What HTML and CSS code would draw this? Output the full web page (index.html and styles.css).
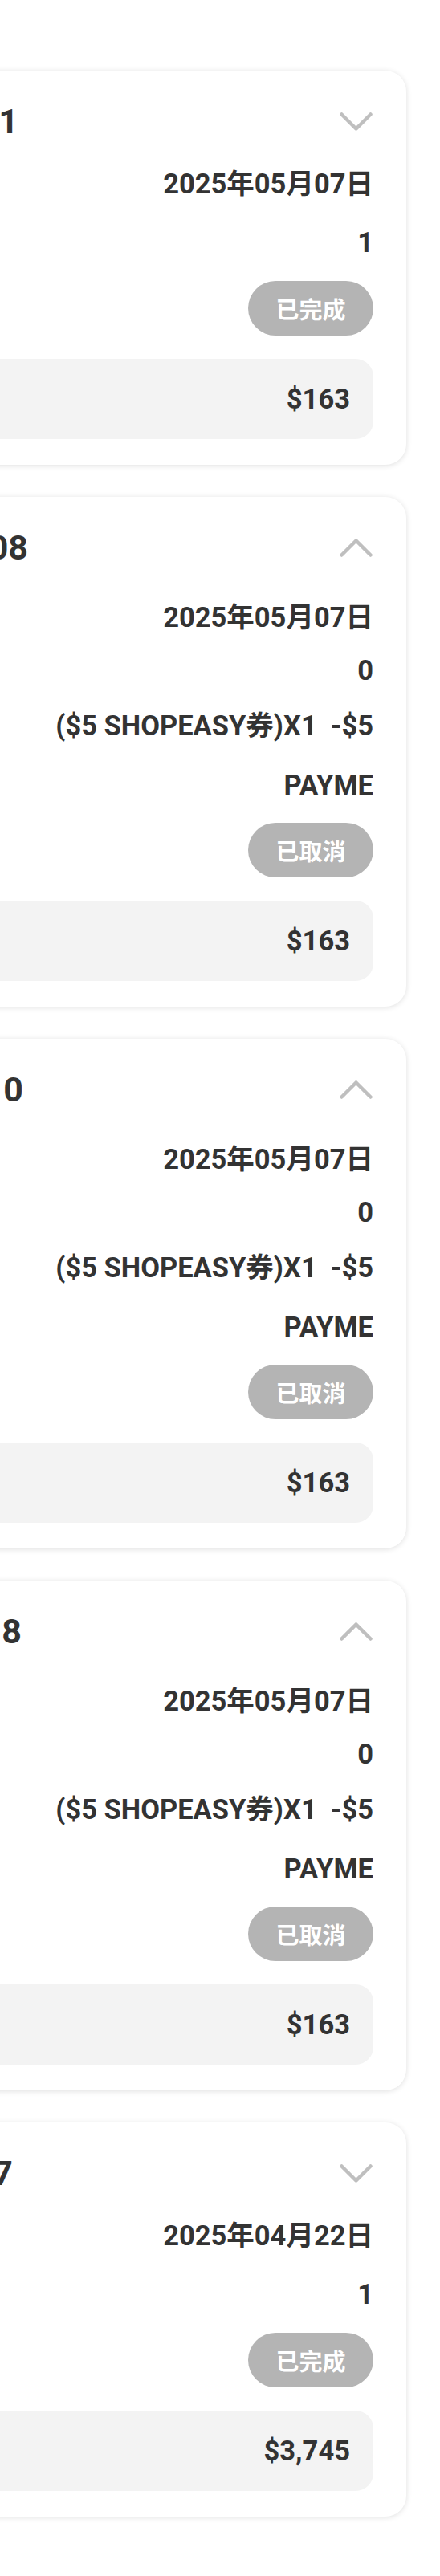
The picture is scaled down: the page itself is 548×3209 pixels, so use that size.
FILE: index.html
```html
<!DOCTYPE html>
<html lang="zh-Hant">
<head>
<meta charset="utf-8">
<title>訂單記錄</title>
<link rel="stylesheet" href="styles.css">
</head>
<body>
<main class="page">

  <section class="card">
    <div class="head">
      <span class="order-no n1">#SE0507021</span>
      <svg class="chev" viewBox="0 0 41 23"><polyline points="2.5,2.5 20.5,20.5 38.5,2.5"/></svg>
    </div>
    <div class="row row--date"><span class="value">2025年05月07日</span></div>
    <div class="row row--qty"><span class="value">1</span></div>
    <div class="row row--status"><span class="badge">已完成</span></div>
    <div class="total"><span class="value">$163</span></div>
  </section>

  <section class="card card--open">
    <div class="head">
      <span class="order-no n2">#SE0507008</span>
      <svg class="chev" viewBox="0 0 41 23"><polyline points="2.5,20.5 20.5,2.5 38.5,20.5"/></svg>
    </div>
    <div class="row row--date"><span class="value">2025年05月07日</span></div>
    <div class="row row--qty"><span class="value">0</span></div>
    <div class="row row--coupon"><span class="value">($5 SHOPEASY券)X1&nbsp; -$5</span></div>
    <div class="row row--pay"><span class="value">PAYME</span></div>
    <div class="row row--status"><span class="badge">已取消</span></div>
    <div class="total"><span class="value">$163</span></div>
  </section>

  <section class="card card--open">
    <div class="head">
      <span class="order-no n3">#SE050701 0</span>
      <svg class="chev" viewBox="0 0 41 23"><polyline points="2.5,20.5 20.5,2.5 38.5,20.5"/></svg>
    </div>
    <div class="row row--date"><span class="value">2025年05月07日</span></div>
    <div class="row row--qty"><span class="value">0</span></div>
    <div class="row row--coupon"><span class="value">($5 SHOPEASY券)X1&nbsp; -$5</span></div>
    <div class="row row--pay"><span class="value">PAYME</span></div>
    <div class="row row--status"><span class="badge">已取消</span></div>
    <div class="total"><span class="value">$163</span></div>
  </section>

  <section class="card card--open">
    <div class="head">
      <span class="order-no n4">#SE050700 8</span>
      <svg class="chev" viewBox="0 0 41 23"><polyline points="2.5,20.5 20.5,2.5 38.5,20.5"/></svg>
    </div>
    <div class="row row--date"><span class="value">2025年05月07日</span></div>
    <div class="row row--qty"><span class="value">0</span></div>
    <div class="row row--coupon"><span class="value">($5 SHOPEASY券)X1&nbsp; -$5</span></div>
    <div class="row row--pay"><span class="value">PAYME</span></div>
    <div class="row row--status"><span class="badge">已取消</span></div>
    <div class="total"><span class="value">$163</span></div>
  </section>

  <section class="card">
    <div class="head">
      <span class="order-no n5">#SE0422017</span>
      <svg class="chev" viewBox="0 0 41 23"><polyline points="2.5,2.5 20.5,20.5 38.5,2.5"/></svg>
    </div>
    <div class="row row--date"><span class="value">2025年04月22日</span></div>
    <div class="row row--qty"><span class="value">1</span></div>
    <div class="row row--status"><span class="badge">已完成</span></div>
    <div class="total"><span class="value">$3,745</span></div>
  </section>

</main>
</body>
</html>
```

FILE: styles.css
```css
html, body {
  margin: 0;
  padding: 0;
  background: #ffffff;
  overflow-x: hidden;
}

body {
  font-family: "Roboto", "Noto Sans CJK TC", "Noto Sans", sans-serif;
  font-weight: 700;
  color: #333333;
}

.page {
  display: flex;
  flex-direction: column;
  gap: 40px;
  margin: 0 42px 0 -360px;
  padding: 88px 0 70px;
}

.card {
  display: flex;
  flex-direction: column;
  padding: 38px 41px 32px;
  background: #ffffff;
  border-radius: 26px;
  box-shadow: 0 1px 7px rgba(0, 0, 0, 0.13);
}

.head {
  height: 50px;
  display: flex;
  align-items: center;
  justify-content: space-between;
}

.order-no {
  flex: none;
  font-size: 43px;
  line-height: 50px;
  white-space: pre;
  text-align: right;
}

.n1 { width: 342px; }
.n2 { width: 354px; }
.n3 { width: 348px; }
.n4 { width: 346px; }
.n5 { width: 335px; }

.chev {
  flex: none;
  width: 41px;
  height: 23px;
  margin-right: 1px;
  fill: none;
  stroke: #bfbfbf;
  stroke-width: 4.5;
  stroke-linecap: round;
  stroke-linejoin: round;
}

.row {
  display: flex;
  align-items: center;
  justify-content: flex-end;
  height: 42px;
  font-size: 34.5px;
  line-height: 42px;
  margin-top: 28px;
  white-space: nowrap;
}

.row--date { margin-top: 32px; }
.card--open .row--date { margin-top: 41px; }
.row--qty { margin-top: 31px; }
.card--open .row--qty { margin-top: 24px; }
.row--coupon { margin-top: 27px; }
.row--pay { margin-top: 32px; }
.row--status {
  height: 68px;
  margin-top: 27px;
}
.card--open .row--status { margin-top: 26px; }

.value {
  display: block;
}

.badge {
  display: flex;
  align-items: center;
  justify-content: center;
  width: 156px;
  height: 68px;
  border-radius: 34px;
  background: #b4b4b4;
  color: #ffffff;
  font-family: "Noto Sans CJK TC", sans-serif;
  font-size: 29px;
  line-height: 1;
}

.total {
  display: flex;
  align-items: center;
  justify-content: flex-end;
  height: 100px;
  margin-top: 29px;
  padding: 0 29px 0 30px;
  background: #f3f3f3;
  border-radius: 22px;
  font-size: 34.5px;
  line-height: 42px;
}
```
